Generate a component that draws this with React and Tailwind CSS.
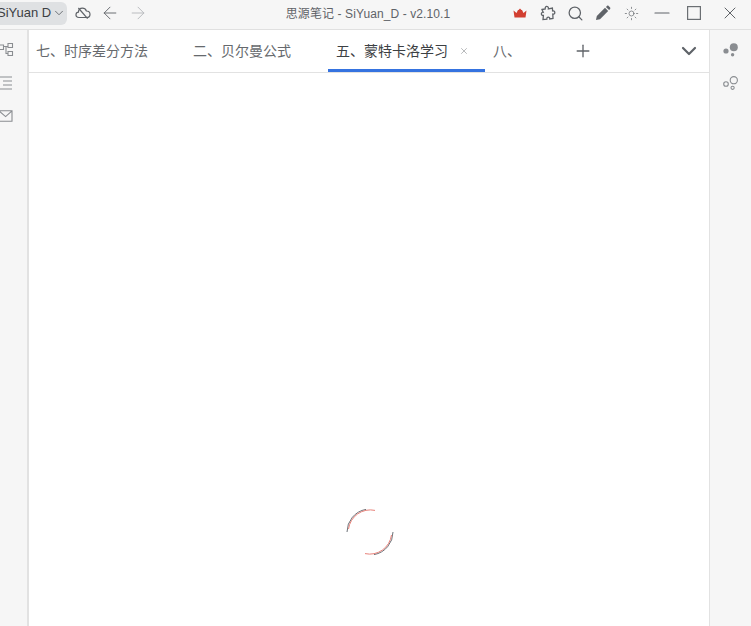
import React from "react";
import { ArrowLeft, ArrowRight, ChevronDown, Plus, Search, Sun, Minus, X } from "lucide-react";

const font = { fontFamily: '"Liberation Sans", "Noto Sans CJK SC", sans-serif' };

const tabs = [
  { title: "七、时序差分方法", width: "w-[157px]" },
  { title: "二、贝尔曼公式", width: "w-[143px]" },
  { title: "五、蒙特卡洛学习", width: "w-[157px]", active: true },
  { title: "八、", width: "w-[87px]" },
];

const Crown = () => (
  <svg width="14" height="10" viewBox="0 0 14 10">
    <path d="M0.5 2.5 L3.5 5 L5 2 L5.6 2 L7 0.5 L8.4 2 L9 2 L10.5 5 L13.5 2.5 L12.5 9.5 L1.5 9.5 Z" fill="#d23f31" />
  </svg>
);

const Puzzle = () => (
  <svg width="16" height="16" viewBox="0 0 16 16" fill="none" stroke="#5f6368" strokeWidth="1.3">
    <path d="M2 4.5 L5.2 4 C5 2 6 1.2 7 1.4 C8.2 1.6 8.6 2.8 8.4 3.8 L12.4 3 L12.6 6 C14 5.6 15 6.6 14.8 7.8 C14.6 9 13.6 9.4 12.8 9.2 L13 13.4 L9.8 14 C9.8 12.6 9 12 8 12.2 C7 12.4 6.6 13.2 6.8 14.2 L3 14.6 L3.4 10.4 C2 10.6 1.2 9.6 1.4 8.6 C1.6 7.6 2.4 7 3.2 7.2 Z" />
  </svg>
);

const PencilSolid = () => (
  <svg width="16" height="16" viewBox="0 0 16 16" fill="#5f6368">
    <path d="M1 15 L1.8 11 L10 2.8 L13.2 6 L5 14.2 Z" />
    <path d="M10.9 1.9 L12 0.9 C12.5 0.5 13.1 0.5 13.6 0.9 L15.1 2.4 C15.5 2.9 15.5 3.5 15.1 4 L14.1 5.1 Z" />
  </svg>
);

const CloudOff = () => (
  <svg width="16" height="14" viewBox="0 0 16 14" fill="none" stroke="#5f6368" strokeWidth="1.2">
    <path d="M4 11.5 C1.8 11.5 0.8 10 1 8.5 C1.2 7 2.2 6.2 3.4 6.2 C3.6 3.6 5.4 2.2 7.4 2.2 C9.4 2.2 10.8 3.4 11.4 5 C13.6 5 15 6.4 15 8.2 C15 10.2 13.4 11.5 11.6 11.5 Z" />
    <path d="M3.4 2 L12.6 12.6" />
  </svg>
);

const SquareIcon = () => (
  <svg width="14" height="14" viewBox="0 0 14 14" fill="none" stroke="#6b6f73" strokeWidth="1.2">
    <rect x="0.6" y="0.6" width="12.8" height="12.8" />
  </svg>
);

const Graph = () => (
  <svg width="16" height="16" viewBox="0 0 16 16" fill="#8a8d91">
    <circle cx="10.8" cy="5.2" r="4" />
    <circle cx="3" cy="9" r="2.6" />
    <circle cx="9.6" cy="12.8" r="1.7" />
  </svg>
);

const GraphOutline = () => (
  <svg width="16" height="16" viewBox="0 0 16 16" fill="none" stroke="#8a8d91" strokeWidth="1.1">
    <circle cx="10.8" cy="5.2" r="3.6" />
    <circle cx="3" cy="9" r="2.3" />
    <circle cx="9.6" cy="12.8" r="1.6" />
  </svg>
);

const Outline = () => (
  <svg width="16" height="16" viewBox="0 0 16 16" fill="none" stroke="#8a8d91" strokeWidth="1.1">
    <path d="M0 3 H4.5 V7.5 H0 M9 1.5 H13.5 V5.5 H9 Z M9 9.5 H13.5 V13.5 H9 Z M4.5 4.5 H9 M7 4.5 V11.5 H9" />
  </svg>
);

const Lines = () => (
  <svg width="16" height="14" viewBox="0 0 16 14" fill="none" stroke="#8a8d91" strokeWidth="1.2">
    <path d="M1 1 H13 M4 5 H13 M4 9 H13 M0 13 H13" />
  </svg>
);

const Mail = () => (
  <svg width="16" height="12" viewBox="0 0 16 12" fill="none" stroke="#8a8d91" strokeWidth="1.1">
    <path d="M0 0.8 H13 V11.2 H0 M0 0.8 L6.6 6.6 L13 0.8" />
  </svg>
);

const Spinner = () => (
  <svg width="50" height="50" viewBox="0 0 50 50" fill="none" strokeWidth="1">
    <path d="M2 25 A23 23 0 0 1 21 2.4" stroke="#6d7278" />
    <path d="M3.5 22 A22 22 0 0 1 30 3.4" stroke="#e8827a" />
    <path d="M48 25 A23 23 0 0 1 29 47.6" stroke="#6d7278" />
    <path d="M46.5 28 A22 22 0 0 1 20 46.6" stroke="#e8827a" />
  </svg>
);

export default function App() {
  return (
    <div className="flex flex-col h-[626px] w-[751px] overflow-hidden bg-white" style={font}>
      <div className="flex items-center h-[30px] shrink-0 bg-[#f6f6f6] border-b border-[#e0e0e0]">
        <div className="flex items-center h-[23px] w-[67px] rounded-r-md bg-[#dfe1e3] text-[13px] text-[#3c4043] overflow-hidden -mt-[3px]">
          <span className="-ml-[3px] whitespace-nowrap w-[54px] shrink-0">SiYuan D</span>
          <ChevronDown size={14} strokeWidth={1.5} className="shrink-0 ml-[1px] text-[#5f6368]" />
        </div>
        <div className="flex items-center ml-[3px] -mt-[3px]">
          <span className="flex justify-center w-[26px]"><CloudOff /></span>
          <span className="flex justify-center w-[28px]"><ArrowLeft size={20} strokeWidth={1.1} className="text-[#5f6368]" /></span>
          <span className="flex justify-center w-[28px]"><ArrowRight size={20} strokeWidth={1.1} className="text-[#b5b7ba]" /></span>
        </div>
        <div className="flex-1 text-center text-[12px] text-[#5f6368] pl-[78px] -mt-[1px] tracking-[0.1px] whitespace-nowrap">
          思源笔记 - SiYuan_D - v2.10.1
        </div>
        <div className="flex items-center -mt-[3px]">
          <span className="flex justify-center w-[28px]"><Crown /></span>
          <span className="flex justify-center w-[27px]"><Puzzle /></span>
          <span className="flex justify-center w-[28px]"><Search size={17} strokeWidth={1.8} className="text-[#5f6368]" /></span>
          <span className="flex justify-center w-[28px]"><PencilSolid /></span>
          <span className="flex justify-center w-[28px]"><Sun size={15} strokeWidth={1.1} className="text-[#5f6368]" /></span>
          <span className="flex justify-center w-[34px]"><Minus size={24} strokeWidth={1.2} className="text-[#5f6368]" /></span>
          <span className="flex justify-center w-[29px]"><SquareIcon /></span>
          <span className="flex justify-center w-[43px]"><X size={20} strokeWidth={1.2} className="text-[#5f6368]" /></span>
        </div>
      </div>

      <div className="flex flex-1 min-h-0">
        <div className="flex flex-col items-start w-[29px] shrink-0 bg-[#f6f6f6] border-r-2 border-[#e2e2e2] overflow-hidden pt-[12px] gap-[17px]">
          <span className="flex items-center -ml-[1px] h-[16px]"><Outline /></span>
          <span className="flex items-center -ml-[1px] h-[16px]"><Lines /></span>
          <span className="flex items-center -ml-[1px] h-[16px]"><Mail /></span>
        </div>

        <div className="flex flex-col flex-1 min-w-0">
          <div className="flex items-stretch h-[43px] shrink-0 border-b border-[#e2e2e2] -ml-[1px]">
            {tabs.map((tab) => (
              <div
                key={tab.title}
                className={
                  tab.active
                    ? `flex items-center ${tab.width} px-2 pt-[3px] border-b-[3px] border-[#3573e0] text-[14px] text-[#3c4043]`
                    : `flex items-center ${tab.width} px-2 text-[14px] text-[#66696d]`
                }
              >
                <span className="flex-1 whitespace-nowrap">{tab.title}</span>
                {tab.active && <X size={10} strokeWidth={1.3} className="mr-[8px] text-[#7b7e82]" />}
              </div>
            ))}
            <div className="flex items-center flex-1">
              <Plus size={20} strokeWidth={1.6} className="ml-[1px] text-[#5f6368]" />
              <ChevronDown size={24} strokeWidth={2.2} className="ml-auto mr-[8px] text-[#5f6368]" />
            </div>
          </div>
          <div className="flex flex-1 justify-center items-start pt-[434px] pl-[2px]">
            <Spinner />
          </div>
        </div>

        <div className="flex flex-col items-center w-[42px] shrink-0 bg-[#f6f6f6] border-l border-[#e2e2e2] pt-[12px] gap-[17px]">
          <Graph />
          <GraphOutline />
        </div>
      </div>
    </div>
  );
}
